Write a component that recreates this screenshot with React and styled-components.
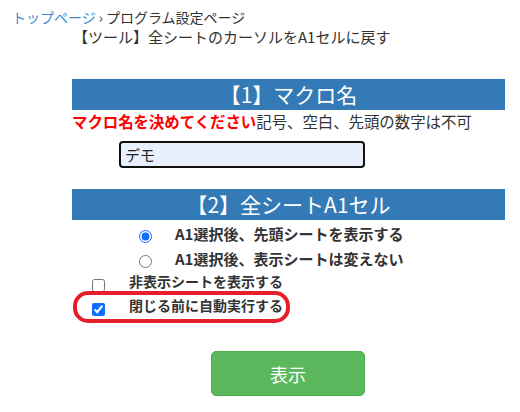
import React from "react";
import styled, { createGlobalStyle } from "styled-components";

const Global = createGlobalStyle`
  body { margin: 0; background: #fff; font-family: "Noto Sans CJK JP", "Noto Sans", sans-serif; color: #222; }
`;

const Page = styled.div`
  width: 520px;
  height: 412px;
  overflow: hidden;
  padding-top: 8px;
  box-sizing: border-box;
`;

const Crumbs = styled.div`
  padding-left: 12px;
  font-size: 14px;
  line-height: 19px;
  color: #333;
`;
const CrumbLink = styled.a`
  color: #3a8dcf;
  text-decoration: none;
`;
const Sep = styled.span`
  margin: 0 3px;
`;
const Subtitle = styled.div`
  padding-left: 73px;
  font-size: 15px;
  line-height: 19px;
  color: #333;
`;

const Section = styled.div`
  margin-left: 72px;
  width: 433px;
  margin-top: ${(p) => p.$top}px;
`;

const Header = styled.div`
  background: #337ab7;
  color: #fff;
  height: 31px;
  font-size: 21px;
  line-height: 31px;
  text-align: center;
`;

const Note = styled.div`
  font-size: 15.4px;
  line-height: 20px;
  margin-top: 1px;
  color: #333;
  white-space: nowrap;
`;
const Warn = styled.span`
  color: #ff0000;
  font-weight: bold;
`;

const InputRow = styled.div`
  padding-left: 47px;
  margin-top: 10px;
`;
const Input = styled.input`
  width: 246px;
  height: 27px;
  box-sizing: border-box;
  border: 2px solid #111;
  border-radius: 4px;
  background: #e8f0fe;
  font-family: inherit;
  font-size: 15px;
  padding: 0 4px;
  outline: none;
  color: #222;
`;

const Options = styled.div`
  display: flex;
  flex-direction: column;
`;
const RadioRow = styled.label`
  display: flex;
  align-items: flex-start;
  height: 25px;
  padding-left: 67px;
  font-size: 15px;
  line-height: 22px;
  font-weight: bold;
  color: #333;
`;
const Radio = styled.input`
  margin: 10px 0 0 0;
  width: 13px;
  height: 13px;
  flex: none;
  accent-color: #0d6efd;
`;
const OptText = styled.span`
  margin-left: 23px;
  margin-top: 3px;
`;
const CheckRow = styled.label`
  position: relative;
  display: flex;
  align-items: flex-start;
  height: 24px;
  padding-left: 20px;
  font-size: 14px;
  line-height: 22px;
  font-weight: bold;
  color: #333;
`;
const Check = styled.input`
  margin: 9px 0 0 0;
  width: 13px;
  height: 13px;
  flex: none;
  accent-color: #0d6efd;
`;
const CheckText = styled.span`
  margin-left: 24px;
`;
const Ring = styled.span`
  position: absolute;
  left: 1px;
  top: -3px;
  width: 217px;
  height: 32px;
  box-sizing: border-box;
  border: 4px solid #e6202a;
  border-radius: 15px;
  pointer-events: none;
`;

const ButtonRow = styled.div`
  display: flex;
  padding-left: 211px;
  margin-top: 33px;
`;
const Button = styled.button`
  width: 154px;
  height: 45px;
  background: #5cb85c;
  border: 1px solid #4cae4c;
  border-radius: 5px;
  color: #fff;
  font-family: inherit;
  font-size: 18px;
`;

export default function App() {
  return (
    <Page>
      <Global />
      <Crumbs>
        <CrumbLink href="#">トップページ</CrumbLink>
        <Sep>›</Sep>プログラム設定ページ
      </Crumbs>
      <Subtitle>【ツール】全シートのカーソルをA1セルに戻す</Subtitle>
      <Section $top={33}>
        <Header>【1】マクロ名</Header>
        <Note>
          <Warn>マクロ名を決めてください</Warn>記号、空白、先頭の数字は不可
        </Note>
        <InputRow>
          <Input defaultValue="デモ" />
        </InputRow>
      </Section>
      <Section $top={21}>
        <Header>【2】全シートA1セル</Header>
        <Options>
          <RadioRow>
            <Radio type="radio" name="a1" defaultChecked />
            <OptText>A1選択後、先頭シートを表示する</OptText>
          </RadioRow>
          <RadioRow>
            <Radio type="radio" name="a1" />
            <OptText>A1選択後、表示シートは変えない</OptText>
          </RadioRow>
          <CheckRow>
            <Check type="checkbox" />
            <CheckText>非表示シートを表示する</CheckText>
          </CheckRow>
          <CheckRow>
            <Check type="checkbox" defaultChecked />
            <CheckText>閉じる前に自動実行する</CheckText>
            <Ring />
          </CheckRow>
        </Options>
      </Section>
      <ButtonRow>
        <Button>表示</Button>
      </ButtonRow>
    </Page>
  );
}
